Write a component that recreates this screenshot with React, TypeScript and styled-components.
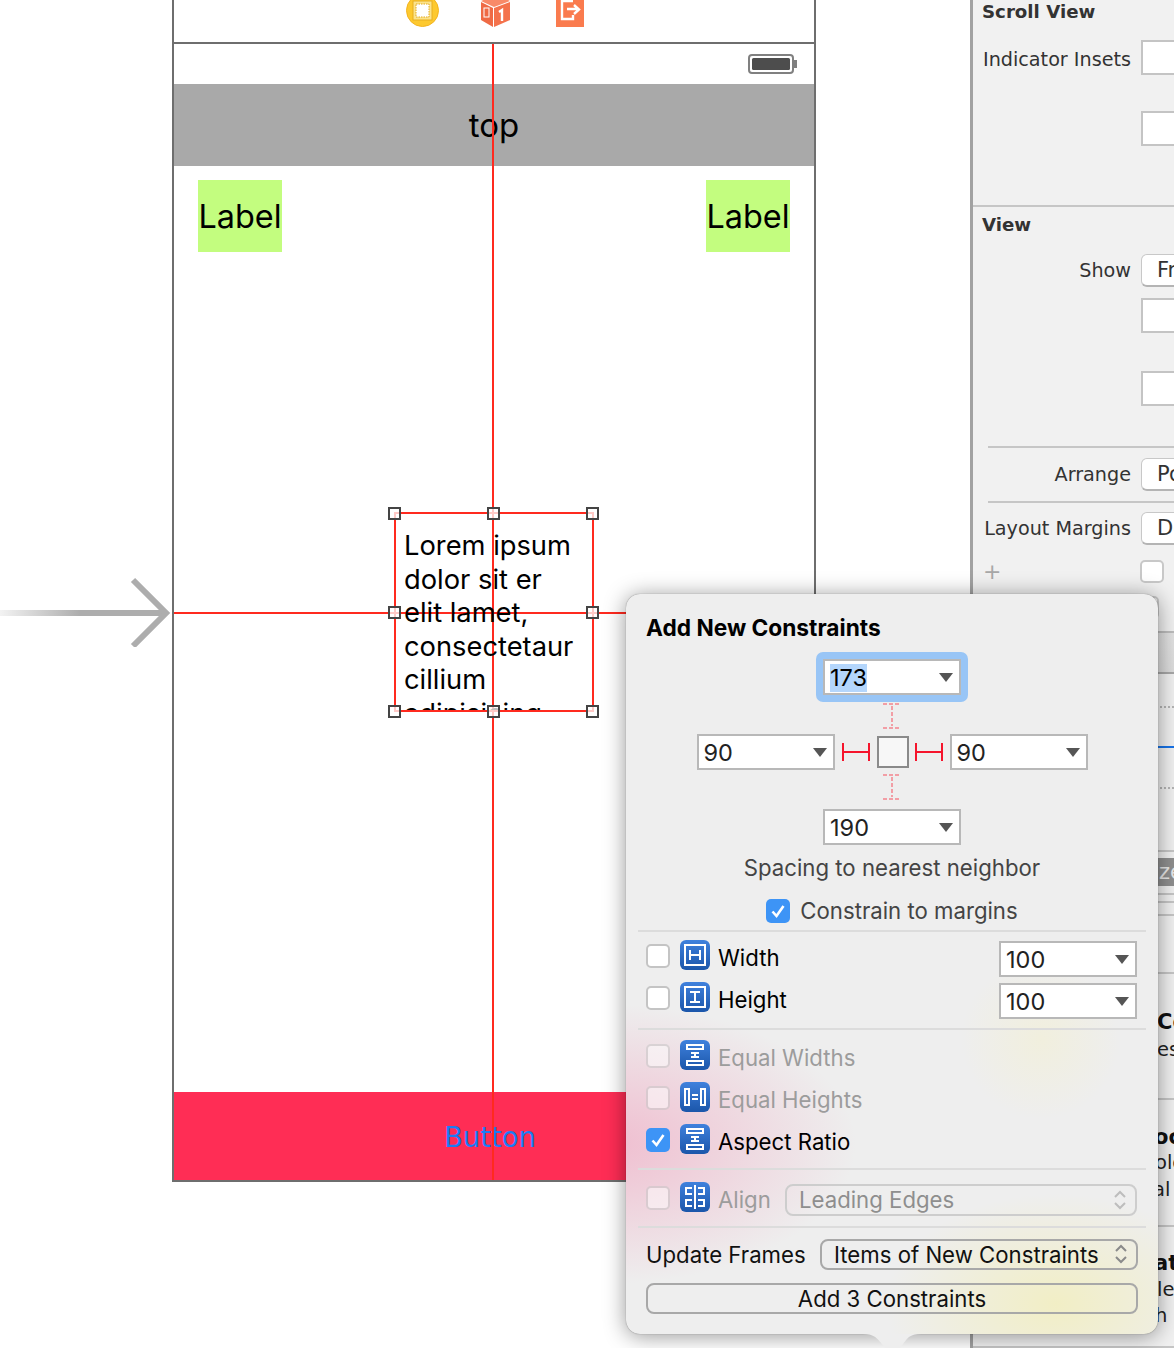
import React from "react";
import styled, { createGlobalStyle } from "styled-components";

const GlobalStyle = createGlobalStyle`
    html, body {
        margin: 0;
        padding: 0;
        background: #ffffff;
    }
    * {
        box-sizing: border-box;
    }
`;

const UI_FONT = `Inter, "Liberation Sans", sans-serif`;
const INSPECTOR_FONT = `"DejaVu Sans", "Liberation Sans", sans-serif`;

const handleSpots = [
    [0, 0], [50, 0], [100, 0],
    [0, 50], [100, 50],
    [0, 100], [50, 100], [100, 100],
];

function DropArrow() {
    return (
        <svg width="14" height="9" viewBox="0 0 14 9">
            <path d="M0 0H14L7 9Z" fill="#555555" />
        </svg>
    );
}

function Stepper({ color }: { color: string }) {
    return (
        <svg width="14" height="22" viewBox="0 0 14 22" fill="none" stroke={color} strokeWidth="2">
            <path d="M2 8L7 3L12 8" />
            <path d="M2 14L7 19L12 14" />
        </svg>
    );
}

function Strut({ dashed, horizontal }: { dashed?: boolean; horizontal?: boolean }) {
    if (horizontal) {
        return (
            <svg width="28" height="18" viewBox="0 0 28 18" fill="none" stroke="#f5142c" strokeWidth="2">
                <path d="M1 0V18M27 0V18M1 9H27" />
            </svg>
        );
    }
    return (
        <svg width="18" height="28" viewBox="0 0 18 28" fill="none" stroke="#f29ea5" strokeWidth="2" strokeDasharray={dashed ? "4 2" : undefined}>
            <path d="M0 2H18M0 26H18M9 4V24" />
        </svg>
    );
}

function WidthGlyph() {
    return (
        <svg width="30" height="30" viewBox="0 0 30 30" fill="none" stroke="#fff" strokeWidth="2">
            <rect x="5" y="5" width="20" height="20" />
            <path d="M10 10V20M20 10V20M10 15H20" />
        </svg>
    );
}

function HeightGlyph() {
    return (
        <svg width="30" height="30" viewBox="0 0 30 30" fill="none" stroke="#fff" strokeWidth="2">
            <rect x="5" y="5" width="20" height="20" />
            <path d="M10 10H20M10 20H20M15 10V20" />
        </svg>
    );
}

function EqualWidthGlyph() {
    return (
        <svg width="30" height="30" viewBox="0 0 30 30" fill="none" stroke="#fff" strokeWidth="2">
            <rect x="7" y="5" width="16" height="4" />
            <rect x="7" y="21" width="16" height="4" />
            <path d="M11 13H19M11 17H19M15 13V17" />
        </svg>
    );
}

function EqualHeightGlyph() {
    return (
        <svg width="30" height="30" viewBox="0 0 30 30" fill="none" stroke="#fff" strokeWidth="2">
            <rect x="5" y="7" width="4" height="16" />
            <rect x="21" y="7" width="4" height="16" />
            <path d="M12 13H18M12 17H18" />
        </svg>
    );
}

function AlignGlyph() {
    return (
        <svg width="30" height="30" viewBox="0 0 30 30" fill="none" stroke="#fff" strokeWidth="2">
            <path d="M15 3V27" />
            <path d="M12 6H6V12H12M12 18H6V24H12" />
            <path d="M18 6H24V12H18M18 18H24V24H18" />
        </svg>
    );
}

function CheckMark() {
    return (
        <svg width="24" height="24" viewBox="0 0 24 24" fill="none" stroke="#fff" strokeWidth="2.6">
            <path d="M6.5 12.5L10.5 17L17.5 7" />
        </svg>
    );
}

function SceneArrow() {
    return (
        <svg width="172" height="70" viewBox="0 0 172 70" fill="none">
            <defs>
                <linearGradient id="arrowFade" x1="0" y1="0" x2="80" y2="0" gradientUnits="userSpaceOnUse">
                    <stop offset="0" stopColor="#adadad" stopOpacity="0.15" />
                    <stop offset="1" stopColor="#adadad" />
                </linearGradient>
            </defs>
            <rect x="0" y="33" width="166" height="6" fill="url(#arrowFade)" />
            <path d="M133 3L166 36L133 69" stroke="#adadad" strokeWidth="6" />
        </svg>
    );
}

function ViewControllerIcon() {
    return (
        <svg width="33" height="33" viewBox="0 0 33 33">
            <circle cx="16.5" cy="16.5" r="16" fill="#fdc92f" stroke="#f3b321" />
            <rect x="7" y="7" width="19" height="19" fill="#fbe38c" stroke="#e8ae20" />
            <rect x="10" y="10" width="13" height="13" fill="#ffffff" stroke="#e3a81c" strokeDasharray="1.5 1" />
        </svg>
    );
}

function FirstResponderIcon() {
    return (
        <svg width="29" height="33" viewBox="0 0 29 33">
            <path d="M0 8L12 14V33L0 26Z" fill="#ef6a45" />
            <path d="M13 14L29 8V26L13 33Z" fill="#f4724c" />
            <path d="M0 7L16 0L29 7L13 13Z" fill="#f88a68" />
            <rect x="3" y="14" width="5" height="9" fill="none" stroke="#fff" strokeWidth="1" />
            <path d="M18 18L21 16V27" fill="none" stroke="#fff" strokeWidth="2.4" />
        </svg>
    );
}

function ExitIcon() {
    return (
        <svg width="28" height="33" viewBox="0 0 28 33">
            <rect width="28" height="33" fill="#fa7b4e" />
            <path d="M17 7H6V25H17V21" fill="none" stroke="#fff" strokeWidth="2.4" />
            <path d="M11 15H21M18 11L23 15.5L18 20" fill="none" stroke="#fff" strokeWidth="2.4" />
        </svg>
    );
}

function BatteryIcon() {
    return (
        <svg width="50" height="20" viewBox="0 0 50 20">
            <rect x="1" y="1" width="44" height="18" rx="3" fill="none" stroke="#808080" strokeWidth="2" />
            <rect x="4" y="4" width="38" height="12" rx="1.5" fill="#4d4d4d" />
            <rect x="46" y="6" width="3" height="8" fill="#808080" />
        </svg>
    );
}

function PopoverTail() {
    return (
        <svg width="58" height="16" viewBox="0 0 58 16">
            <path d="M0 0C12 0 14 4 24 16H36C44 4 46 0 58 0Z" fill="#eeeeee" />
        </svg>
    );
}

export default function App() {
    return (
        <>
            <GlobalStyle />
            <Page>
                <Canvas>
                    <ArrowSlot>
                        <SceneArrow />
                    </ArrowSlot>
                    <Scene>
                        <Dock>
                            <ViewControllerIcon />
                            <FirstResponderIcon />
                            <ExitIcon />
                        </Dock>
                        <StatusBar>
                            <BatteryIcon />
                        </StatusBar>
                        <TopBar>top</TopBar>
                        <LabelRow>
                            <GreenLabel>Label</GreenLabel>
                            <GreenLabel>Label</GreenLabel>
                        </LabelRow>
                        <BottomButton>Button</BottomButton>

                        <GuideVertical />
                        <GuideHorizontal />
                        <TextFrame>
                            <LoremText>
                                Lorem ipsum dolor sit er elit lamet, consectetaur cillium adipisicing
                            </LoremText>
                        </TextFrame>
                        <HandleLayer>
                            {handleSpots.map(([x, y]) => (
                                <Handle key={`${x}-${y}`} style={{ left: `${x}%`, top: `${y}%` }} />
                            ))}
                        </HandleLayer>
                    </Scene>
                </Canvas>

                <Inspector>
                    <InspectorTitle $top={0}>Scroll View</InspectorTitle>
                    <InsetRow $top={16}>
                        <InspectorLabel $width={161} $drop={3}>Indicator Insets</InspectorLabel>
                        <InspectorField />
                    </InsetRow>
                    <InsetRow $top={36}>
                        <InspectorLabel $width={161} />
                        <InspectorField />
                    </InsetRow>
                    <InspectorRule $top={59} $inset={0} />
                    <InspectorTitle $top={6}>View</InspectorTitle>
                    <InsetRow $top={17}>
                        <InspectorLabel $width={161}>Show</InspectorLabel>
                        <InspectorButton>Fr</InspectorButton>
                    </InsetRow>
                    <InsetRow $top={11}>
                        <InspectorLabel $width={161} />
                        <InspectorField />
                    </InsetRow>
                    <InsetRow $top={38}>
                        <InspectorLabel $width={161} />
                        <InspectorField />
                    </InsetRow>
                    <InspectorRule $top={40} $inset={15} />
                    <InsetRow $top={10}>
                        <InspectorLabel $width={161}>Arrange</InspectorLabel>
                        <InspectorButton>Po</InspectorButton>
                    </InsetRow>
                    <InspectorRule $top={10} $inset={15} />
                    <InsetRow $top={9}>
                        <InspectorLabel $width={161}>Layout Margins</InspectorLabel>
                        <InspectorButton>De</InspectorButton>
                    </InsetRow>
                    <InsetRow $top={15}>
                        <PlusSign>+</PlusSign>
                        <InspectorCheck />
                    </InsetRow>
                    <InsetRow $top={13}>
                        <InspectorLabel $width={161} />
                        <InspectorCheck />
                    </InsetRow>

                    <ShadedBand $top={12} $height={43} />
                    <DottedRule $top={32} />
                    <BlueRule $top={38} />
                    <DottedRule $top={39} />
                    <InspectorRule $top={61} $inset={0} />
                    <GreyTag>ze</GreyTag>
                    <InspectorRule $top={7} $inset={0} />
                    <InspectorRule $top={6} $inset={0} />
                    <InspectorRule $top={11} $inset={0} />
                    <InspectorRule $top={56} $inset={0} />
                    <StripBold $top={35}>Constraints</StripBold>
                    <StripText $top={2}>esign</StripText>
                    <InspectorRule $top={35} $inset={0} />
                    <StripBold $top={24} $shift={-3}>ocument</StripBold>
                    <StripText $top={0} $shift={-2}>olor</StripText>
                    <StripText $top={1} $shift={-4}>al</StripText>
                    <InspectorRule $top={22} $inset={0} />
                    <StripBold $top={23} $shift={-3}>ate</StripBold>
                    <StripText $top={1}>le</StripText>
                    <StripText $top={0} $shift={-2}>h</StripText>
                    <InspectorRule $top={17} $inset={0} />
                </Inspector>

                <Popover>
                    <PopoverTitle>Add New Constraints</PopoverTitle>
                    <SpacingEditor>
                        <FocusRing>
                            <NumberField>
                                <SelectedValue>173</SelectedValue>
                                <DropArrow />
                            </NumberField>
                        </FocusRing>
                        <Strut dashed />
                        <SpacingRow>
                            <NumberField>
                                90
                                <DropArrow />
                            </NumberField>
                            <Strut horizontal />
                            <ViewBox />
                            <Strut horizontal />
                            <NumberField>
                                90
                                <DropArrow />
                            </NumberField>
                        </SpacingRow>
                        <LowerStrut>
                            <Strut dashed />
                        </LowerStrut>
                        <BottomField>
                            <NumberField>
                                190
                                <DropArrow />
                            </NumberField>
                        </BottomField>
                        <SpacingCaption>Spacing to nearest neighbor</SpacingCaption>
                        <ConstrainRow>
                            <CheckBox $checked>
                                <CheckMark />
                            </CheckBox>
                            <ConstrainText>Constrain to margins</ConstrainText>
                        </ConstrainRow>
                    </SpacingEditor>

                    <Divider />
                    <OptionGroup $top={8} $bottom={16}>
                        <OptionRow>
                            <CheckBox />
                            <ConstraintIcon><WidthGlyph /></ConstraintIcon>
                            <OptionLabel>Width</OptionLabel>
                            <SizeField>
                                <NumberField>
                                    100
                                    <DropArrow />
                                </NumberField>
                            </SizeField>
                        </OptionRow>
                        <OptionRow>
                            <CheckBox />
                            <ConstraintIcon><HeightGlyph /></ConstraintIcon>
                            <OptionLabel>Height</OptionLabel>
                            <SizeField>
                                <NumberField>
                                    100
                                    <DropArrow />
                                </NumberField>
                            </SizeField>
                        </OptionRow>
                    </OptionGroup>

                    <Divider />
                    <OptionGroup $top={10} $bottom={14}>
                        <OptionRow>
                            <CheckBox $disabled />
                            <ConstraintIcon><EqualWidthGlyph /></ConstraintIcon>
                            <OptionLabel $disabled>Equal Widths</OptionLabel>
                        </OptionRow>
                        <OptionRow>
                            <CheckBox $disabled />
                            <ConstraintIcon><EqualHeightGlyph /></ConstraintIcon>
                            <OptionLabel $disabled>Equal Heights</OptionLabel>
                        </OptionRow>
                        <OptionRow>
                            <CheckBox $checked>
                                <CheckMark />
                            </CheckBox>
                            <ConstraintIcon><EqualWidthGlyph /></ConstraintIcon>
                            <OptionLabel>Aspect Ratio</OptionLabel>
                        </OptionRow>
                    </OptionGroup>

                    <Divider />
                    <OptionGroup $top={12} $bottom={14}>
                        <OptionRow>
                            <CheckBox $disabled />
                            <ConstraintIcon><AlignGlyph /></ConstraintIcon>
                            <OptionLabel $disabled>Align</OptionLabel>
                            <AlignSelect>
                                Leading Edges
                                <Stepper color="#bdbdbd" />
                            </AlignSelect>
                        </OptionRow>
                    </OptionGroup>

                    <Divider />
                    <UpdateRow>
                        <UpdateLabel>Update Frames</UpdateLabel>
                        <UpdateSelect>
                            Items of New Constraints
                            <Stepper color="#8a8a8a" />
                        </UpdateSelect>
                    </UpdateRow>
                    <AddButton>Add 3 Constraints</AddButton>
                    <TailSlot>
                        <PopoverTail />
                    </TailSlot>
                </Popover>
            </Page>
        </>
    );
}

const Page = styled.div`
    position: relative;
    display: flex;
    width: 1174px;
    height: 1348px;
    overflow: hidden;
    background: #ffffff;
    font-family: ${UI_FONT};
`;

const Canvas = styled.div`
    position: relative;
    width: 970px;
    height: 1348px;
    padding-left: 172px;
    flex: none;
`;

const ArrowSlot = styled.div`
    position: absolute;
    left: 0;
    top: 577px;
    line-height: 0;
`;

const Scene = styled.div`
    position: relative;
    display: flex;
    flex-direction: column;
    width: 644px;
    height: 1182px;
    border: 2px solid #6e6e6e;
    border-top: none;
`;

const Dock = styled.div`
    display: flex;
    align-items: flex-end;
    height: 44px;
    flex: none;
    padding: 0 0 15px 232px;
    gap: 42px;
    border-bottom: 2px solid #6e6e6e;
    overflow: hidden;

    svg {
        flex: none;
    }

    svg:last-child {
        margin-left: 4px;
    }
`;

const StatusBar = styled.div`
    display: flex;
    justify-content: flex-end;
    align-items: center;
    height: 40px;
    flex: none;
    padding-right: 16px;
`;

const TopBar = styled.div`
    display: flex;
    justify-content: center;
    align-items: center;
    height: 82px;
    flex: none;
    background: #a9a9a9;
    color: #000000;
    font-size: 33px;
`;

const LabelRow = styled.div`
    display: flex;
    justify-content: space-between;
    padding: 14px 24px 0 24px;
`;

const GreenLabel = styled.div`
    display: flex;
    justify-content: center;
    align-items: center;
    width: 84px;
    height: 72px;
    background: #c3fd7f;
    color: #000000;
    font-size: 32.4px;
`;

const BottomButton = styled.div`
    display: flex;
    justify-content: center;
    align-items: center;
    height: 88px;
    margin-top: auto;
    padding: 1px 8px 0 0;
    background: #ff2d55;
    color: #1a7cf5;
    font-family: ${INSPECTOR_FONT};
    font-size: 27.5px;
`;

const GuideVertical = styled.div`
    position: absolute;
    left: 318px;
    top: 44px;
    bottom: 0;
    width: 2px;
    background: #ff2a1f;
`;

const GuideHorizontal = styled.div`
    position: absolute;
    left: 0;
    right: 0;
    top: 612px;
    height: 2px;
    background: #ff2a1f;
`;

const TextFrame = styled.div`
    position: absolute;
    left: 220px;
    top: 512px;
    width: 200px;
    height: 200px;
    border: 2px solid #ff2a1f;
    padding: 15px 8px 0 8px;
    overflow: hidden;
`;

const LoremText = styled.div`
    color: #000000;
    font-size: 27.3px;
    line-height: 33.6px;
`;

const HandleLayer = styled.div`
    position: absolute;
    left: 220px;
    top: 513px;
    width: 198px;
    height: 198px;
`;

const Handle = styled.div`
    position: absolute;
    width: 13px;
    height: 13px;
    margin: -6.5px 0 0 -6px;
    border: 2px solid #444444;
    background: rgba(255, 255, 255, 0.75);
`;

const Inspector = styled.div`
    flex: none;
    width: 204px;
    height: 1348px;
    border-left: 3px solid #a2a2a2;
    background: #f1f1f1;
    font-family: ${INSPECTOR_FONT};
    color: #333333;
    overflow: hidden;
`;

const InspectorTitle = styled.div<{ $top: number }>`
    margin-top: ${(p) => p.$top}px;
    padding-left: 9px;
    height: 24px;
    line-height: 24px;
    font-size: 18.2px;
    font-weight: 700;
    white-space: nowrap;
`;

const InsetRow = styled.div<{ $top: number }>`
    display: flex;
    align-items: center;
    margin-top: ${(p) => p.$top}px;
    white-space: nowrap;
`;

const InspectorLabel = styled.div<{ $width: number; $drop?: number }>`
    flex: none;
    width: ${(p) => p.$width}px;
    padding-top: ${(p) => p.$drop ?? 0}px;
    padding-right: 3px;
    text-align: right;
    font-size: 19.2px;
`;

const InspectorField = styled.div`
    flex: none;
    width: 60px;
    height: 35px;
    margin-left: 7px;
    border: 2px solid #c4c4c4;
    background: #ffffff;
`;

const InspectorButton = styled.div`
    flex: none;
    width: 60px;
    height: 33px;
    margin-left: 7px;
    padding-left: 15px;
    border: 1px solid #c8c8c8;
    border-bottom: 2px solid #b4b4b4;
    border-radius: 6px;
    background: #ffffff;
    line-height: 30px;
    font-size: 21px;
`;

const PlusSign = styled.div`
    flex: none;
    width: 166px;
    padding-left: 10px;
    color: #a8a8a8;
    font-size: 22px;
    line-height: 23px;
`;

const InspectorCheck = styled.div`
    flex: none;
    width: 24px;
    height: 23px;
    margin-left: 1px;
    border: 2px solid #c8c8c8;
    border-radius: 5px;
    background: #ffffff;
`;

const InspectorRule = styled.div<{ $top: number; $inset: number }>`
    height: 2px;
    margin-top: ${(p) => p.$top}px;
    margin-left: ${(p) => p.$inset}px;
    background: #c6c6c6;
`;

const ShadedBand = styled.div<{ $top: number; $height: number }>`
    height: ${(p) => p.$height}px;
    margin-top: ${(p) => p.$top}px;
    border-top: 2px solid #bdbdbd;
    border-bottom: 2px solid #a8a8a8;
    background: linear-gradient(#e2e2e2, #dcdcdc);
`;

const DottedRule = styled.div<{ $top: number }>`
    margin-top: ${(p) => p.$top}px;
    border-top: 2px dotted #b5b5b5;
`;

const BlueRule = styled.div<{ $top: number }>`
    margin-top: ${(p) => p.$top}px;
    height: 2px;
    background: #1773e8;
`;

const GreyTag = styled.div`
    height: 28px;
    margin-top: 6px;
    padding-left: 186px;
    background: #8f8f8f;
    color: #e8e8e8;
    font-size: 21px;
    line-height: 28px;
    white-space: nowrap;
`;

const StripBold = styled.div<{ $top: number; $shift?: number }>`
    margin-top: ${(p) => p.$top}px;
    padding-left: ${(p) => 184 + (p.$shift ?? 0)}px;
    height: 26px;
    line-height: 26px;
    font-size: 21px;
    font-weight: 700;
    color: #111111;
    white-space: nowrap;
`;

const StripText = styled.div<{ $top: number; $shift?: number }>`
    margin-top: ${(p) => p.$top}px;
    padding-left: ${(p) => 184 + (p.$shift ?? 0)}px;
    height: 26px;
    line-height: 26px;
    font-size: 19.5px;
    color: #222222;
    white-space: nowrap;
`;

const Popover = styled.div`
    position: absolute;
    left: 626px;
    top: 594px;
    display: flex;
    flex-direction: column;
    width: 532px;
    height: 740px;
    border-radius: 14px;
    background:
        radial-gradient(ellipse 250px 140px at -20px 550px, rgba(240, 178, 200, 0.8), rgba(240, 178, 200, 0) 100%),
        radial-gradient(circle 80px at 415px 445px, rgba(244, 240, 205, 0.5), rgba(244, 240, 205, 0) 100%),
        radial-gradient(ellipse 170px 110px at 430px 710px, rgba(242, 238, 190, 0.85), rgba(242, 238, 190, 0) 100%),
        #eeeeee;
    box-shadow: 0 2px 22px rgba(0, 0, 0, 0.42), 0 0 1px rgba(0, 0, 0, 0.5);
    font-size: 22.2px;
    color: #111111;
    white-space: nowrap;
`;

const TailSlot = styled.div`
    position: absolute;
    left: 237px;
    top: 100%;
    line-height: 0;
`;

const PopoverTitle = styled.div`
    margin: 20px 0 0 20px;
    height: 28px;
    line-height: 28px;
    font-size: 22.7px;
    font-weight: 700;
    color: #000000;
`;

const SpacingEditor = styled.div`
    display: flex;
    flex-direction: column;
    align-items: center;
    margin-top: 10px;
`;

const FocusRing = styled.div`
    display: flex;
    justify-content: center;
    align-items: center;
    width: 152px;
    height: 50px;
    border-radius: 7px;
    background: #98c5f6;
`;

const NumberField = styled.div`
    display: flex;
    justify-content: space-between;
    align-items: center;
    flex: none;
    width: 138px;
    height: 36px;
    padding: 1px 6px 0 5px;
    border: 2px solid #b8b8b8;
    background: #ffffff;
    color: #222222;
    font-size: 23.5px;
`;

const SelectedValue = styled.span`
    background: #b4d6fc;
    color: #000000;
    line-height: 28px;
`;

const SpacingRow = styled.div`
    display: flex;
    align-items: center;
    gap: 7px;
    margin-top: 4px;
    height: 36px;
`;

const ViewBox = styled.div`
    flex: none;
    width: 32px;
    height: 32px;
    margin: 0 -1px 0 0;
    border: 2px solid #8a8a8a;
    background: #f7f7f7;
`;

const LowerStrut = styled.div`
    margin-top: 3px;
    line-height: 0;
`;

const BottomField = styled.div`
    margin-top: 8px;
`;

const SpacingCaption = styled.div`
    margin-top: 9px;
    height: 28px;
    line-height: 28px;
    color: #444444;
`;

const ConstrainRow = styled.div`
    display: flex;
    align-items: center;
    gap: 10px;
    margin-top: 16px;
    height: 24px;
`;

const ConstrainText = styled.div`
    color: #444444;
`;

const CheckBox = styled.div<{ $checked?: boolean; $disabled?: boolean }>`
    flex: none;
    width: 24px;
    height: 24px;
    margin-top: 2px;
    border-radius: 5px;
    border: ${(p) => (p.$checked ? "none" : "2px solid #c4c4c4")};
    background: ${(p) => (p.$checked ? "#3d94f6" : "#ffffff")};
    opacity: ${(p) => (p.$disabled ? 0.5 : 1)};
    line-height: 0;
`;

const Divider = styled.div`
    flex: none;
    height: 2px;
    margin: 8px 12px 0 12px;
    background: #dcdcdc;

    & ~ & {
        margin-top: 0;
    }
`;

const OptionGroup = styled.div<{ $top: number; $bottom: number }>`
    display: flex;
    flex-direction: column;
    gap: 12px;
    padding: ${(p) => p.$top}px 21px ${(p) => p.$bottom}px 20px;
`;

const OptionRow = styled.div`
    display: flex;
    align-items: center;
    height: 30px;
`;

const ConstraintIcon = styled.div`
    flex: none;
    width: 30px;
    height: 30px;
    margin-left: 10px;
    border-radius: 6px;
    background: linear-gradient(#3f81dd, #1b56aa);
    line-height: 0;
`;

const OptionLabel = styled.div<{ $disabled?: boolean }>`
    margin-left: 8px;
    padding-top: 5px;
    color: ${(p) => (p.$disabled ? "#9c9c9c" : "#000000")};
`;

const SizeField = styled.div`
    align-self: flex-start;
    margin: 1px 0 0 auto;
`;

const AlignSelect = styled.div`
    display: flex;
    justify-content: space-between;
    align-items: center;
    flex: none;
    width: 352px;
    height: 32px;
    margin: 5px 0 0 auto;
    padding: 0 8px 0 12px;
    border: 2px solid #cdcdcd;
    border-radius: 8px;
    color: #8e8e8e;
`;

const UpdateRow = styled.div`
    display: flex;
    align-items: center;
    justify-content: space-between;
    height: 30px;
    margin: 11px 20px 0 20px;
`;

const UpdateLabel = styled.div`
    color: #111111;
`;

const UpdateSelect = styled.div`
    display: flex;
    justify-content: space-between;
    align-items: center;
    flex: none;
    width: 318px;
    height: 31px;
    padding: 0 8px 0 12px;
    border: 2px solid #a8a8a8;
    border-radius: 8px;
    color: #111111;
`;

const AddButton = styled.div`
    display: flex;
    justify-content: center;
    align-items: center;
    height: 31px;
    margin: 14px 20px 0 20px;
    border: 2px solid #a8a8a8;
    border-radius: 8px;
    color: #111111;
`;
